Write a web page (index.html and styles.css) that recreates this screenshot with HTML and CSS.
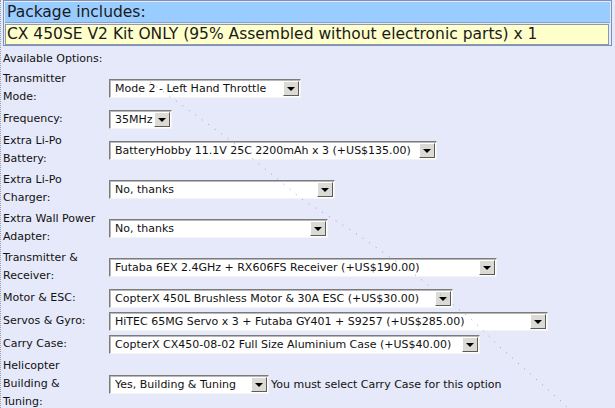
FILE: index.html
```html
<!DOCTYPE html>
<html>
<head>
<meta charset="utf-8">
<link rel="stylesheet" href="styles.css">
</head>
<body>
<div class="page">
  <div class="pkg">
    <div class="pkg-head">Package includes:</div>
    <div class="pkg-item">CX 450SE V2 Kit ONLY (95% Assembled without electronic parts) x 1</div>
  </div>
  <div class="avail">Available Options:</div>
  <div class="opts">
    <div class="lbl">Transmitter<br>Mode:</div>
    <div class="cell"><div class="sel w-mode"><span class="val">Mode 2 - Left Hand Throttle</span><span class="btn"></span></div></div>

    <div class="lbl">Frequency:</div>
    <div class="cell"><div class="sel w-freq"><span class="val">35MHz</span><span class="btn"></span></div></div>

    <div class="lbl">Extra Li-Po<br>Battery:</div>
    <div class="cell"><div class="sel w-batt"><span class="val">BatteryHobby 11.1V 25C 2200mAh x 3 (+US$135.00)</span><span class="btn"></span></div></div>

    <div class="lbl">Extra Li-Po<br>Charger:</div>
    <div class="cell"><div class="sel w-charg"><span class="val">No, thanks</span><span class="btn"></span></div></div>

    <div class="lbl">Extra Wall Power<br>Adapter:</div>
    <div class="cell"><div class="sel w-wall"><span class="val">No, thanks</span><span class="btn"></span></div></div>

    <div class="lbl">Transmitter &amp;<br>Receiver:</div>
    <div class="cell"><div class="sel w-txrx"><span class="val">Futaba 6EX 2.4GHz + RX606FS Receiver (+US$190.00)</span><span class="btn"></span></div></div>

    <div class="lbl">Motor &amp; ESC:</div>
    <div class="cell"><div class="sel w-motor"><span class="val">CopterX 450L Brushless Motor &amp; 30A ESC (+US$30.00)</span><span class="btn"></span></div></div>

    <div class="lbl">Servos &amp; Gyro:</div>
    <div class="cell"><div class="sel w-servo"><span class="val">HiTEC 65MG Servo x 3 + Futaba GY401 + S9257 (+US$285.00)</span><span class="btn"></span></div></div>

    <div class="lbl">Carry Case:</div>
    <div class="cell"><div class="sel w-case"><span class="val">CopterX CX450-08-02 Full Size Aluminium Case (+US$40.00)</span><span class="btn"></span></div></div>

    <div class="lbl">Helicopter<br>Building &amp;<br>Tuning:</div>
    <div class="cell"><div class="sel w-build"><span class="val">Yes, Building &amp; Tuning</span><span class="btn"></span></div><span class="note">You must select Carry Case for this option</span></div>
  </div>
  <svg class="dots" width="615" height="408" viewBox="0 0 615 408">
    <polyline points="150,82 230,140 303,200 360,236 418,277 470,318 500,347 563,403 570,410" fill="none" stroke="#9a9db2" stroke-width="1" stroke-dasharray="1 7"/>
  </svg>
</div>
</body>
</html>
```
FILE: styles.css
```css
html, body {
  margin: 0;
  padding: 0;
  background: #e6e9f9;
}
body {
  width: 615px;
  height: 408px;
  overflow: hidden;
  font-family: "DejaVu Sans", sans-serif;
  font-size: 11px;
  color: #111;
}
.page {
  position: relative;
  height: 408px;
  border-left: 1px dotted #9a9cb0;
  box-sizing: border-box;
  padding: 0 2px 0 2px;
}
.pkg {
  border: 1px solid #7d92b0;
  margin-right: 1px;
  background: #e6e9f9;
}
.pkg-head {
  background: #99ccff;
  font-size: 15.5px;
  line-height: 20px;
  height: 20px;
  padding-left: 2px;
  margin: 1px 1px 0 1px;
  color: #1a1a1a;
  border-bottom: 1px solid #8fa0b8;
}
.pkg-item {
  background: #ffffcc;
  font-size: 15.5px;
  line-height: 19px;
  height: 19px;
  padding-left: 1px;
  margin: 1px 2px 0 1px;
  border: 1px solid #8a9ab4;
  color: #1a1a1a;
}
.avail {
  line-height: 18px;
  margin-top: 4px;
}
.opts {
  display: grid;
  grid-template-columns: 100px auto;
  column-gap: 6px;
  row-gap: 3px;
  align-items: center;
  margin-top: 2px;
}
.lbl {
  line-height: 18px;
  white-space: nowrap;
}
.cell {
  display: flex;
  align-items: center;
  min-height: 20px;
}
.sel {
  display: flex;
  align-items: center;
  height: 19px;
  box-sizing: border-box;
  background: #fff;
  border-top: 1px solid #7b7b7b;
  border-left: 1px solid #7b7b7b;
  border-right: 1px solid #f4f4f4;
  border-bottom: 1px solid #f4f4f4;
  box-shadow: inset 1px 1px 0 #b8b8b8;
  padding-left: 5px;
  color: #111;
}
.val {
  flex: 1;
  white-space: nowrap;
  overflow: hidden;
}
.btn {
  position: relative;
  width: 16px;
  height: 15px;
  box-sizing: border-box;
  background: #dcdad5;
  border-top: 1px solid #fff;
  border-left: 1px solid #fff;
  border-right: 1px solid #5a5a5a;
  border-bottom: 1px solid #5a5a5a;
  margin-right: 1px;
}
.btn::after {
  content: "";
  position: absolute;
  left: 3px;
  top: 5px;
  border-left: 4px solid transparent;
  border-right: 4px solid transparent;
  border-top: 4px solid #000;
}
.w-mode { width: 192px; }
.w-freq { width: 63px; }
.w-batt { width: 328px; }
.w-charg { width: 226px; }
.w-wall { width: 219px; }
.w-txrx { width: 388px; }
.w-motor { width: 344px; }
.w-servo { width: 439px; }
.w-case { width: 371px; }
.w-build { width: 160px; }
.note {
  margin-left: 2px;
  white-space: nowrap;
}
.dots {
  position: absolute;
  left: -1px;
  top: 0;
  pointer-events: none;
}
```
